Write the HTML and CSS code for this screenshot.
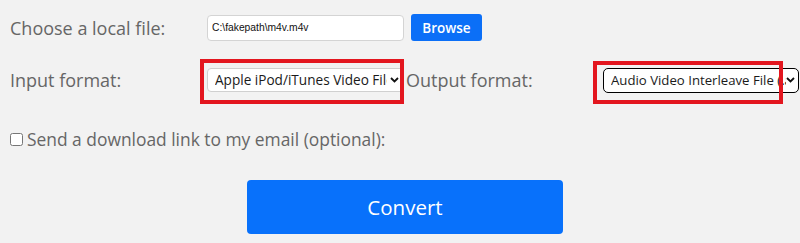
FILE: index.html
```html
<!DOCTYPE html>
<html lang="en">
<head>
<meta charset="utf-8">
<title>Converter</title>
<link rel="stylesheet" href="styles.css">
</head>
<body>
<form class="form">
  <div class="row r1">
    <label class="lbl">Choose a local file:</label>
    <input class="file-text" type="text" value="C:\fakepath\m4v.m4v" readonly>
    <button type="button" class="browse">Browse</button>
  </div>
  <div class="row r2">
    <label class="lbl">Input format:</label>
    <span class="sel-wrap s1">
      <select class="sel"><option>Apple iPod/iTunes Video File (.m4v)</option></select>
      <svg class="chev" width="9" height="6" viewBox="0 0 9 6"><path d="M1 1 L4.5 4.5 L8 1" fill="none" stroke="#111" stroke-width="1.8"/></svg>
    </span>
    <label class="lbl out">Output format:</label>
    <span class="sel-wrap s2">
      <select class="sel focus"><option>Audio Video Interleave File (.avi)</option></select>
      <svg class="chev" width="9" height="6" viewBox="0 0 9 6"><path d="M1 1 L4.5 4.5 L8 1" fill="none" stroke="#111" stroke-width="1.8"/></svg>
    </span>
  </div>
  <div class="row r3">
    <input class="chk" type="checkbox" id="mail">
    <label class="chk-lbl" for="mail">Send a download link to my email (optional):</label>
  </div>
  <div class="row r4">
    <button type="button" class="convert">Convert</button>
  </div>
</form>
<div class="annot a1"></div>
<div class="annot a2"></div>
</body>
</html>
```
FILE: styles.css
```css
html, body {
  margin: 0;
  padding: 0;
  background: #f2f2f2;
}
body {
  position: relative;
  width: 800px;
  height: 243px;
  overflow: hidden;
  font-family: "Open Sans", "Noto Sans", sans-serif;
}
.form {
  padding: 14px 0 0 10px;
}
.row {
  display: flex;
  align-items: center;
  flex-wrap: nowrap;
}
.lbl {
  flex: 0 0 197px;
  font-size: 18px;
  color: #666;
  line-height: 24px;
}
.r1 {
  height: 27px;
}
.file-text {
  box-sizing: border-box;
  width: 197px;
  height: 26px;
  margin: 0;
  padding: 0 4px;
  border: 1px solid #d4d4d4;
  border-radius: 4px;
  background: #fff;
  font-family: "Liberation Sans", Arial, sans-serif;
  font-size: 10.3px;
  color: #111;
  outline: none;
}
.browse {
  box-sizing: border-box;
  margin-left: 7px;
  width: 71px;
  height: 27px;
  border: 0;
  border-radius: 3px;
  background: #0b6ff7;
  color: #fff;
  font-family: "Open Sans", sans-serif;
  font-weight: 600;
  font-size: 13.5px;
  padding: 0;
}
.r2 {
  margin-top: 26px;
  height: 26px;
}
.sel-wrap {
  position: relative;
  flex: 0 0 auto;
  display: block;
}
.sel {
  box-sizing: border-box;
  appearance: none;
  -webkit-appearance: none;
  display: block;
  margin: 0;
  background: #fff;
  font-family: "Open Sans", sans-serif;
  font-size: 13.6px;
  color: #1a1a1a;
  padding: 0 16px 0 7px;
  outline: none;
}
.s1 .sel {
  width: 197px;
  height: 24px;
  border: 1px solid #d0d0d0;
  border-radius: 4px;
}
.s1 {
  margin-top: -1px;
}
.s2 .sel {
  width: 196px;
  height: 25px;
  border: 1.5px solid #000;
  border-radius: 5px;
  padding-left: 7px;
  padding-right: 12px;
  font-size: 13.2px;
}
.chev {
  position: absolute;
  top: 50%;
  margin-top: -3px;
  pointer-events: none;
}
.s1 .chev {
  right: 5px;
}
.s2 .chev {
  right: 4px;
}
.lbl.out {
  margin-left: 2px;
}
.r3 {
  margin-top: 36px;
  height: 20px;
}
.chk {
  margin: 0;
  width: 13px;
  height: 13px;
}
.chk-lbl {
  margin-left: 4px;
  font-size: 17.4px;
  color: #666;
  line-height: 22px;
}
.r4 {
  margin-top: 31px;
}
.convert {
  margin-left: 237px;
  width: 316px;
  height: 54px;
  border: 0;
  border-radius: 4px;
  background: #0871fb;
  color: #fff;
  font-family: "Open Sans", sans-serif;
  font-size: 20.5px;
  padding: 0;
}
.annot {
  position: absolute;
  box-sizing: border-box;
  border: 4.5px solid #e3161f;
  pointer-events: none;
}
.a1 {
  left: 200px;
  top: 59px;
  width: 204px;
  height: 45px;
}
.a2 {
  left: 593px;
  top: 61px;
  width: 190px;
  height: 43px;
}
```
